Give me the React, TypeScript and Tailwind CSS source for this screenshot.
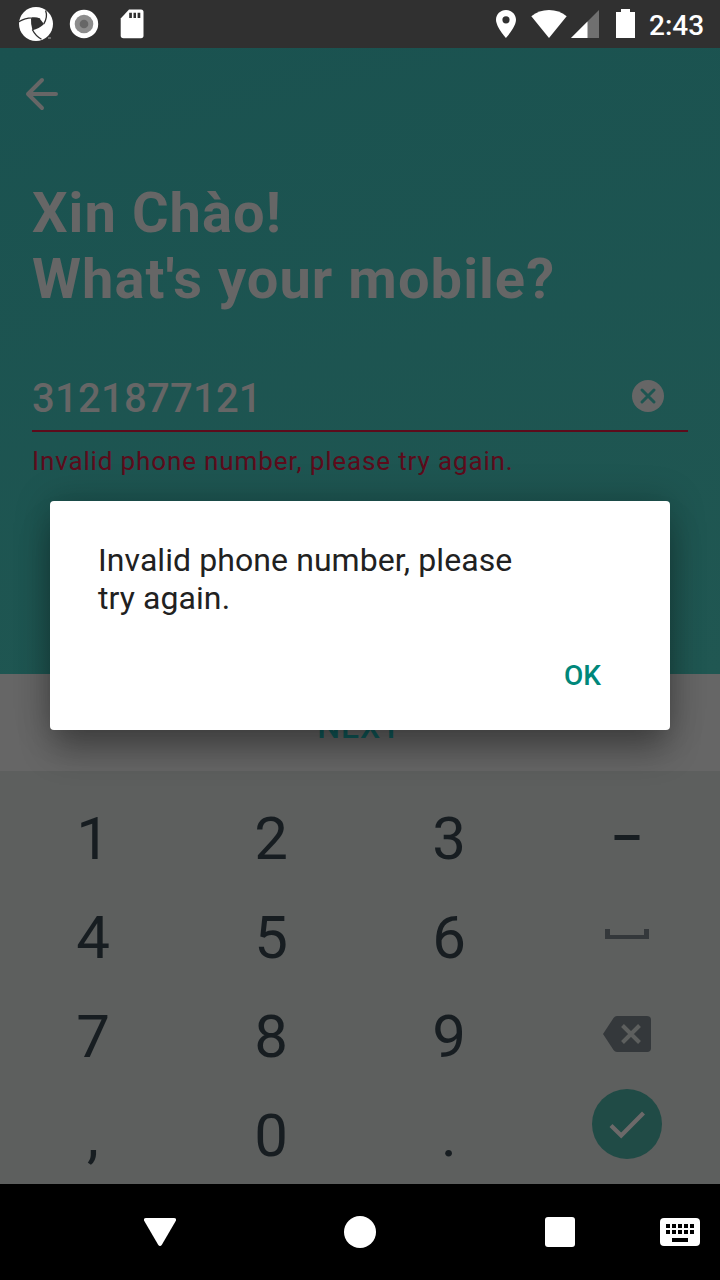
import type { ReactNode } from "react";

function StatusBar() {
  return (
    <header className="flex h-12 items-center bg-[#303030] text-white">
      <svg className="ml-[18px] h-9 w-9" viewBox="0 0 36 36">
        <circle cx="18" cy="18" r="17" fill="#fff" />
        <path d="M13 12.300Q18 11 22 13L26 18Q21 23 14.500 24.200Q12.600 18 13 12.300Z" fill="#303030" />
        <g fill="none" stroke="#303030" strokeWidth="1.300">
          <path d="M.8 15.800Q7 12 14 11.900Q19 11.700 22 13.200" />
          <path d="M27.600 4.500Q30 11 25.800 17.800" />
          <path d="M14.300 23.500Q17.500 30 23.500 33.200" />
        </g>
        <path d="M30 31.500h3v1h-3z" fill="#aaa" />
      </svg>
      <svg className="ml-[15px] h-[30px] w-[30px]" viewBox="0 0 30 30">
        <circle cx="15" cy="15" r="14.200" fill="#fff" />
        <circle cx="15" cy="15" r="9.300" fill="#8c8c8c" />
        <circle cx="15" cy="15" r="4.300" fill="#666" />
      </svg>
      <svg className="ml-[21px] h-[30px] w-6" viewBox="0 0 24 30">
        <path d="M9 .500H21Q23.500 .500 23.500 3V26.500Q23.500 29.300 21 29.300H3.500Q.700 29.300 .700 26.500V9.500Z" fill="#fff" />
        <path d="M9.200 3.700h2.700v5.300H9.200zM13.500 3.700h2.500v5.300h-2.500zM17.600 3.700h2.700v5.300h-2.700z" fill="#303030" />
      </svg>
      <svg className="ml-auto h-7 w-5" viewBox="0 0 20 28">
        <path fillRule="evenodd" d="M10 0C4.400 0 0 4.400 0 9.800C0 17 10 28 10 28S20 17 20 9.800C20 4.400 15.600 0 10 0ZM10 6.200A3.600 3.600 0 1 1 10 13.400A3.600 3.600 0 1 1 10 6.200Z" fill="#fff" />
      </svg>
      <svg className="ml-[15px] h-7 w-9" viewBox="0 0 36 28">
        <path d="M18 28L.300 6.200Q8 0 18 0T35.700 6.200Z" fill="#fff" />
      </svg>
      <svg className="ml-1 h-7 w-7" viewBox="0 0 28 28">
        <path d="M0 28L28 0V28Z" fill="#707070" />
        <path d="M0 28L16.500 11.500V28Z" fill="#fff" />
      </svg>
      <svg className="mb-px ml-[17px] h-[29px] w-[19px]" viewBox="0 0 19 29">
        <path d="M5 0H14V3H19V29H0V3H5Z" fill="#fff" />
      </svg>
      <span className="mr-4 ml-[14px] w-[55px] whitespace-nowrap pt-[3px] text-[28px] leading-none font-medium">2:43</span>
    </header>
  );
}

function PhoneForm() {
  return (
    <main className="flex h-[626px] flex-col bg-linear-[165deg] from-[#1a5250] to-[#205752] px-8 text-[#666]">
      <svg className="mt-[29px] -ml-[7px] h-[34px] w-[34px]" viewBox="0 0 34 34" fill="none" stroke="#666" strokeWidth="4" strokeLinecap="round" strokeLinejoin="round">
        <path d="M31 17H3M17 3L3 17L17 31" />
      </svg>
      <h1 className="mt-[69px] text-[56px] leading-[66px] font-bold tracking-[1.050px] whitespace-nowrap">
        Xin Chào!
        <br />
        What's your mobile?
      </h1>
      <div className="mt-[53px] flex h-[67px] items-center justify-between border-b-2 border-[#5c0b1b] pr-6">
        <span className="pt-[2px] text-[40px] leading-none font-medium tracking-[0.250px]">3121877121</span>
        <svg className="mb-1 h-8 w-8" viewBox="0 0 32 32">
          <circle cx="16" cy="16" r="16" fill="#666" />
          <path d="M10 10L22 22M22 10L10 22" stroke="#1e5551" strokeWidth="3" strokeLinecap="round" />
        </svg>
      </div>
      <p className="mt-[14px] text-[26px] leading-[30px] tracking-[0.860px] whitespace-nowrap text-[#5c0b1b]">
        Invalid phone number, please try again.
      </p>
    </main>
  );
}

function Key({ children }: { children: ReactNode }) {
  return <div className="flex h-[99px] items-center justify-center">{children}</div>;
}

const rows = [["1", "2", "3"], ["4", "5", "6"], ["7", "8", "9"], [",", "0", "."]];

const actions = [
  <svg key="dash" className="h-[5px] w-[26px]" viewBox="0 0 26 5">
    <path d="M.500 0H25.500V5H.500Z" fill="#171d21" />
  </svg>,
  <svg key="space" className="-mt-[5px] h-[10px] w-11" viewBox="0 0 44 10">
    <path d="M0 0H5V6H39V0H44V10H0Z" fill="#34383b" />
  </svg>,
  <svg key="delete" className="-mt-1 h-9 w-12" viewBox="0 0 48 36">
    <path d="M14 0H44Q48 0 48 4V32Q48 36 44 36H14Q12 36 10.500 34L0 18L10.500 2Q12 0 14 0Z" fill="#34383b" />
    <path d="M19.500 9.500L36.500 26.500M36.500 9.500L19.500 26.500" stroke="#5d5f5e" strokeWidth="4" />
  </svg>,
  <svg key="done" className="-mt-[21px] h-[70px] w-[70px]" viewBox="0 0 70 70">
    <circle cx="35" cy="35" r="35" fill="#204b46" />
    <path d="M19 36.500L29.200 46.500L51.500 24" fill="none" stroke="#6c6969" strokeWidth="4.200" />
  </svg>,
];

function Keypad() {
  return (
    <section className="h-[413px] bg-[#5d5f5e] px-1 pt-[17px]">
      {rows.map((row, i) => (
        <div key={i} className="grid grid-cols-4">
          {row.map((label) => (
            <Key key={label}>
              <span className="pt-[2px] text-[60px] leading-none text-[#171d21]">{label}</span>
            </Key>
          ))}
          <Key>{actions[i]}</Key>
        </div>
      ))}
    </section>
  );
}

function NavigationBar() {
  return (
    <nav className="flex h-24 items-center bg-black">
      <svg className="ml-36 h-8 w-8" viewBox="0 0 32 32">
        <path d="M2 2H30Q33 2 31.700 5L18 28.500Q16 31.500 14 28.500L.300 5Q-1 2 2 2Z" fill="#fff" />
      </svg>
      <div className="ml-[168px] h-8 w-8 rounded-full bg-white" />
      <div className="ml-[169px] h-[30px] w-[30px] rounded-[3px] bg-white" />
      <svg className="ml-[85px] h-7 w-10" viewBox="0 0 40 28">
        <rect width="40" height="28" rx="4" fill="#fff" />
        <path d="M6 8H34M6 14H34" stroke="#000" strokeWidth="4" strokeDasharray="4 2" />
        <path d="M12 20H28V24H12Z" fill="#000" />
      </svg>
    </nav>
  );
}

export default function App() {
  return (
    <div className="relative h-[1280px] w-[720px] overflow-hidden font-['Roboto',sans-serif]">
      <StatusBar />
      <PhoneForm />
      <div className="flex h-[97px] items-center justify-center bg-[#666]">
        <span className="mt-2 mr-px text-[32px] leading-none font-medium tracking-[1px] text-[#105c5c]">NEXT</span>
      </div>
      <Keypad />
      <NavigationBar />
      <div
        role="dialog"
        className="absolute top-[501px] left-[50px] flex h-[229px] w-[620px] flex-col rounded bg-white px-12 pt-10 shadow-[0_24px_32px_-4px_rgba(0,0,0,0.30),0_0_36px_rgba(0,0,0,0.24)]"
      >
        <p className="w-[430px] text-[32px] leading-[38px] tracking-[0.080px] text-[#212121]">Invalid phone number, please try again.</p>
        <button className="mt-[43px] mr-[21px] self-end text-[28px] leading-8 font-medium text-[#00877a]">OK</button>
      </div>
    </div>
  );
}
